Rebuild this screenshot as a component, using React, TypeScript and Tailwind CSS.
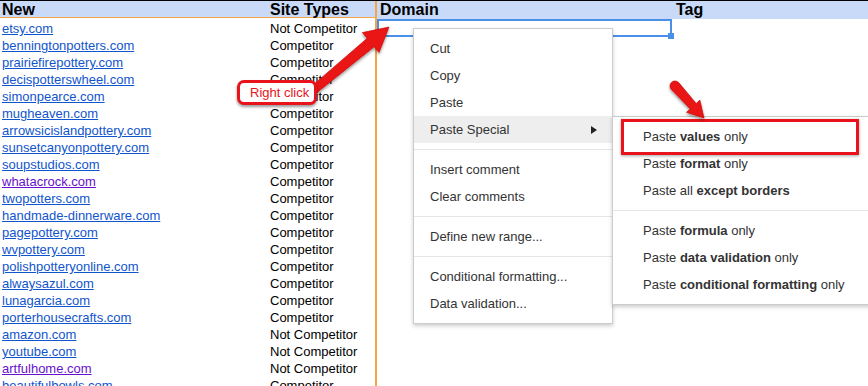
const rows: [string, string, boolean?][] = [
  ["etsy.com", "Not Competitor"],
  ["benningtonpotters.com", "Competitor"],
  ["prairiefirepottery.com", "Competitor"],
  ["decispotterswheel.com", "Competitor"],
  ["simonpearce.com", "Competitor"],
  ["mugheaven.com", "Competitor"],
  ["arrowsicislandpottery.com", "Competitor"],
  ["sunsetcanyonpottery.com", "Competitor"],
  ["soupstudios.com", "Competitor"],
  ["whatacrock.com", "Competitor", true],
  ["twopotters.com", "Competitor"],
  ["handmade-dinnerware.com", "Competitor"],
  ["pagepottery.com", "Competitor"],
  ["wvpottery.com", "Competitor"],
  ["polishpotteryonline.com", "Competitor"],
  ["alwaysazul.com", "Competitor"],
  ["lunagarcia.com", "Competitor"],
  ["porterhousecrafts.com", "Competitor"],
  ["amazon.com", "Not Competitor"],
  ["youtube.com", "Not Competitor"],
  ["artfulhome.com", "Not Competitor", true],
  ["beautifulbowls.com", "Competitor"],
];

function MenuItem({ children, active }: { children: React.ReactNode; active?: boolean }) {
  return (
    <div className={`h-[27px] leading-[27px] pl-4 pr-3 flex justify-between items-center ${active ? "bg-[#eeeeee]" : ""}`}>
      <span>{children}</span>
      {active && (
        <svg width="6" height="8" viewBox="0 0 6 8" className="mr-[3px]">
          <polygon points="0,0 6,4 0,8" fill="#222" />
        </svg>
      )}
    </div>
  );
}

function SubItem({ pre, bold, post }: { pre: string; bold: string; post?: string }) {
  return (
    <div className="h-[27px] leading-[27px] pl-[30px] whitespace-nowrap">
      {pre} <b className="font-bold">{bold}</b>{post ? ` ${post}` : ""}
    </div>
  );
}

function Sep() {
  return <div className="my-[6px] h-px bg-[#e5e5e5]" />;
}

export default function App() {
  return (
    <div className="relative w-[868px] h-[386px] overflow-hidden bg-white border-t border-black font-['Liberation_Sans',Arial,sans-serif] text-[13px]">

      {/* SHEET */}
      <div className="flex">
        <div className="w-[377px] border-r-2 border-[#f6a545] h-[400px]">
          <div className="grid grid-cols-[268px_107px] h-[17px] leading-[17px] bg-[#c9daf8] border-b border-[#f6a545] text-[16px] font-bold text-black">
            <div className="pl-[2px]">New</div>
            <div className="pl-[2px]">Site Types</div>
          </div>
          {rows.map(([site, type, visited]) => (
            <div key={site} className="grid grid-cols-[268px_107px] h-[17px] pt-[4px] leading-[13px]">
              <div className={`pl-[2px] underline ${visited ? "text-[#6611cc]" : "text-[#1155cc]"}`}>{site}</div>
              <div className="pl-[2px] text-black whitespace-nowrap">{type}</div>
            </div>
          ))}
        </div>

        <div className="flex-1">
          <div className="flex h-[18px] leading-[17px] bg-[#c9daf8] text-[16px] font-bold text-black">
            <div className="w-[296px] pl-[3px]">Domain</div>
            <div className="pl-[3px]">Tag</div>
          </div>
        </div>
      </div>

      {/* SELECTION */}
      <div className="absolute left-[377px] top-[18px] w-[295px] h-[18px] border-2 border-[#4a90e8]" />
      <div className="absolute left-[668px] top-[32px] w-[6px] h-[6px] bg-[#4a90e8]" />

      {/* CONTEXT MENU */}
      <div className="absolute left-[413px] top-[27px] w-[200px] bg-white border border-[#cccccc] shadow-[0_2px_4px_rgba(0,0,0,0.2)] py-[6px] text-[#333333]">
        <MenuItem>Cut</MenuItem>
        <MenuItem>Copy</MenuItem>
        <MenuItem>Paste</MenuItem>
        <MenuItem active>Paste Special</MenuItem>
        <Sep />
        <MenuItem>Insert comment</MenuItem>
        <MenuItem>Clear comments</MenuItem>
        <Sep />
        <MenuItem>Define new range...</MenuItem>
        <Sep />
        <MenuItem>Conditional formatting...</MenuItem>
        <MenuItem>Data validation...</MenuItem>
      </div>

      {/* SUBMENU */}
      <div className="absolute left-[612px] top-[115px] w-[270px] bg-white border border-[#cccccc] shadow-[0_2px_4px_rgba(0,0,0,0.2)] py-[6px] text-[#333333]">
        <SubItem pre="Paste" bold="values" post="only" />
        <SubItem pre="Paste" bold="format" post="only" />
        <SubItem pre="Paste all" bold="except borders" />
        <Sep />
        <SubItem pre="Paste" bold="formula" post="only" />
        <SubItem pre="Paste" bold="data validation" post="only" />
        <SubItem pre="Paste" bold="conditional formatting" post="only" />
      </div>

      {/* HIGHLIGHT BOX */}
      <div className="absolute left-[621px] top-[118px] w-[238px] h-[36px] border-[3px] border-[#e8131b] shadow-[0_1px_3px_rgba(0,0,0,0.35)]" />

      {/* ARROWS */}
      <svg className="absolute left-0 top-0" width="868" height="386" viewBox="0 0 868 386">
        <defs>
          <filter id="sh" x="-20%" y="-20%" width="140%" height="140%">
            <feDropShadow dx="0" dy="2" stdDeviation="1.5" floodColor="#000" floodOpacity="0.4" />
          </filter>
        </defs>
        <path
          d="M307.4 88.9 L367.2 37.3 L362.3 31.6 L389 26 L379.1 51.4 L374.2 45.7 L312.6 95.1 Z"
          fill="#ea1515"
          stroke="#c40000"
          strokeWidth="0.6"
          filter="url(#sh)"
        />
        <path
          d="M671.3 88.4 A5 5 0 0 1 678.7 81.6 L696.2 102.5 L699.9 99.1 L704 117 L686.5 111.3 L690.2 107.9 Z"
          fill="#ea1515"
          stroke="#c40000"
          strokeWidth="0.6"
          filter="url(#sh)"
        />
      </svg>

      {/* LABEL */}
      <div className="absolute left-[237px] top-[79px] w-[80px] h-[25px] bg-white border-[3px] border-[#e8131b] rounded-[7px] shadow-[0_2px_3px_rgba(0,0,0,0.4)] text-[#e8131b] leading-[19px] pl-[10px]">
        Right click
      </div>
    </div>
  );
}
